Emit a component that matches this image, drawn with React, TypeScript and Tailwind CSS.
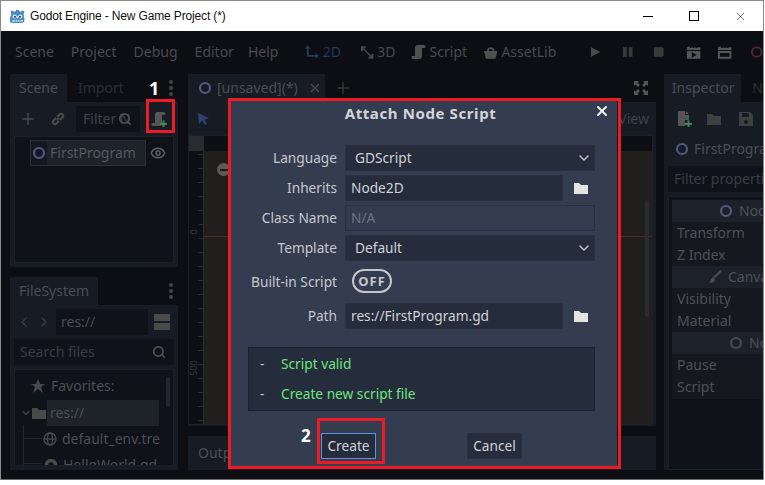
import React from 'react';
import { ChevronDown, ChevronLeft, ChevronRight, Eye, Plus, Search, X } from 'lucide-react';

const font = { fontFamily: '"Noto Sans", sans-serif' };

const ticks = Array.from({ length: 20 }, (_, i) => i);

const Circle = ({ className = 'text-[#4f5b7e]' }: { className?: string }) => (
  <svg width="14" height="14" viewBox="0 0 14 14" className={`shrink-0 ${className}`}>
    <circle cx="7" cy="7" r="5" fill="none" stroke="currentColor" strokeWidth="2.2" />
  </svg>
);

const Folder = ({ className = 'text-[#e0e0e0]', size = 14 }: { className?: string; size?: number }) => (
  <svg width={size} height={size} viewBox="0 0 14 14" className={`shrink-0 ${className}`}>
    <path d="M0 2h5l2 2h7v9H0z" fill="currentColor" />
  </svg>
);

const ScriptIcon = ({ className = 'text-[#555]', plus }: { className?: string; plus?: boolean }) => (
  <svg width="16" height="16" viewBox="0 0 16 16" className={`shrink-0 ${className}`}>
    <path d="M6 1h7a2 2 0 0 1 1 3h-3v8a3 3 0 0 1-2 3H2a2 2 0 0 1-1-3h3V4a3 3 0 0 1 2-3z" fill="currentColor" />
    {plus && <path d="M9 12h2.500V9.500h2V12H16v2h-2.500v2h-2v-2H9z" fill="#3f8a52" />}
  </svg>
);

const PageIcon = () => (
  <svg width="16" height="16" viewBox="0 0 16 16" className="shrink-0 text-[#555]">
    <path d="M2 0h7v4h4v5H9v6H2zM10 0l3 3h-3z" fill="currentColor" />
    <path d="M9 12h2.500V9.500h2V12H16v2h-2.500v2h-2v-2H9z" fill="#3f8a52" />
  </svg>
);

const Dots = () => (
  <div className="flex flex-col gap-[2px]">
    <span className="w-1 h-1 rounded-full bg-[#444]" />
    <span className="w-1 h-1 rounded-full bg-[#444]" />
    <span className="w-1 h-1 rounded-full bg-[#444]" />
  </div>
);

const GodotLogo = () => (
  <svg width="15" height="15" viewBox="0 0 16 16" className="shrink-0">
    <path d="M1.500 5.500L.5 2.500 3 1.500l1 1.500 2-.5.500-1.500h3l.5 1.500 2 .5 1-1.500 2.500 1-1 3 .5 3.500.500 1-.5 4-3 1H3l-3-1-.5-4 .5-1z" fill="#478cbf" />
    <circle cx="5" cy="8" r="2.200" fill="#e8eef4" />
    <circle cx="11" cy="8" r="2.200" fill="#e8eef4" />
    <circle cx="5.300" cy="8.200" r="1.100" fill="#2f3a46" />
    <circle cx="10.700" cy="8.200" r="1.100" fill="#2f3a46" />
    <rect x="7.300" y="8" width="1.400" height="2" fill="#e8eef4" />
    <path d="M2.500 12h11v1.500h-11z" fill="#e8eef4" />
    <path d="M5 12h1v1.500H5zM7.500 12h1v1.500h-1zM10 12h1v1.500h-1z" fill="#478cbf" />
  </svg>
);

const Field = ({ children, wide, dim }: { children: React.ReactNode; wide?: boolean; dim?: boolean }) => (
  <div className={`h-[26px] flex items-center px-[5px] border border-[#2a3040] ${wide ? 'w-[250px]' : 'w-[218px]'} ${dim ? 'bg-[#333b4e] text-[#6b7280]' : 'bg-[#252c3b] text-[#d0d2d6]'}`}>
    {children}
  </div>
);

const Row = ({ label, children }: { label: string; children: React.ReactNode }) => (
  <div className="flex items-center gap-2 h-[26px]">
    <span className="w-[89px] text-right whitespace-nowrap text-[#c6c8cd]">{label}</span>
    {children}
  </div>
);

const Select = ({ value }: { value: string }) => (
  <div className="w-[250px] h-[26px] flex items-center justify-between pl-[9px] pr-[2px] border border-[#2a3040] bg-[#252c3b] text-[#d0d2d6]">
    {value}
    <ChevronDown size={16} strokeWidth={2.4} className="text-[#b9bcc2]" />
  </div>
);

const DialogBox = () => (
  <div className="absolute left-[228px] top-[98px] w-[393px] h-[371px] border-[3px] border-[#ed1c24] pr-px">
    <div className="h-full bg-[#343c50] pl-[17px] pr-[22px] text-[13.7px] relative">
      <div className="h-[25px] flex items-center justify-center font-bold text-[#d2d4d8] text-[15px] tracking-[0.6px] pr-[2px]">Attach Node Script</div>
      <X size={16} strokeWidth={3} className="absolute right-[7px] top-[2px] text-[#f0f0f0]" />
      <div className="flex flex-col gap-1 mt-[19px]">
        <Row label="Language"><Select value="GDScript" /></Row>
        <Row label="Inherits">
          <Field>Node2D</Field>
          <Folder className="ml-[3px] text-[#e4e4e4]" />
        </Row>
        <Row label="Class Name"><Field wide dim>N/A</Field></Row>
        <Row label="Template"><Select value="Default" /></Row>
      </div>
      <div className="flex items-center gap-[15px] h-[26px] mt-[7px]">
        <span className="w-[89px] text-right whitespace-nowrap text-[#c6c8cd] pt-[2px]">Built-in Script</span>
        <div className="w-[40px] h-[24px] rounded-full border-[2px] border-[#c4c6cb] flex items-center justify-center font-bold text-[13px] tracking-[1px] text-[#c6c8cd]">OFF</div>
      </div>
      <div className="mt-[9px]">
        <Row label="Path">
          <Field>res://FirstProgram.gd</Field>
          <Folder className="ml-[3px] text-[#e4e4e4]" />
        </Row>
      </div>
      <div className="mt-[18px] h-[64px] w-[347px] bg-[#252c3b] border border-[#1c2230] flex flex-col pt-px">
        <div className="h-[30px] flex items-center text-[#6ee57f]"><span className="w-[32px] pl-[11px] text-[#c6c8cd]">-</span>Script valid</div>
        <div className="h-[30px] flex items-center text-[#6ee57f]"><span className="w-[32px] pl-[11px] text-[#c6c8cd]">-</span>Create new script file</div>
      </div>
      <div className="flex items-center mt-[22px] pl-[73px]">
        <div className="w-[55px] h-[26px] flex items-center justify-center border border-[#5a94de] bg-[#252c3b] text-[#d0d2d6]">Create</div>
        <div className="w-[55px] h-[26px] ml-[91px] flex items-center justify-center border border-[#2a3040] bg-[#252c3b] text-[#d0d2d6]">Cancel</div>
      </div>
    </div>
  </div>
);

const Marks = () => (
  <>
    <div className="absolute left-[146px] top-[99px] w-[29px] h-[34px] border-[3px] border-[#ed1c24]" />
    <div className="absolute left-[317px] top-[418px] w-[68px] h-[46px] border-[3px] border-[#ed1c24]" />
    <span className="absolute left-[149px] top-[76px] font-bold text-[18px] leading-[24px] text-white">1</span>
    <span className="absolute left-[301px] top-[424px] font-bold text-[17px] leading-[24px] text-white">2</span>
  </>
);

const InspectorRow = ({ children }: { children: React.ReactNode }) => (
  <div className="h-[22px] flex items-center pl-[5px] text-[#4d5157] whitespace-nowrap">{children}</div>
);

const InspectorHead = ({ children, className }: { children: React.ReactNode; className: string }) => (
  <div className={`h-[22px] flex items-center gap-[6px] bg-[#1d2129] text-[#4d5157] whitespace-nowrap ${className}`}>{children}</div>
);

const App = () => (
  <div className="relative w-[765px] h-[485px] bg-white overflow-hidden text-sm" style={font}>
    <div className="w-[764px] h-[480px] border-t border-l border-r border-[#8a8a8a] flex flex-col">
      {/* title bar */}
      <div className="h-[30px] shrink-0 flex items-center bg-white text-[#111]">
        <div className="ml-[9px] mr-[5px]"><GodotLogo /></div>
        <span style={{ fontFamily: '"Liberation Sans", sans-serif' }} className="text-[12px] tracking-[-0.15px] pt-[2px]">Godot Engine - New Game Project (*)</span>
        <div className="ml-auto flex items-center">
          <div className="w-[46px] flex justify-center"><span className="w-[10px] h-px bg-black" /></div>
          <div className="w-[46px] flex justify-center"><span className="w-[10px] h-[10px] border border-black" /></div>
          <div className="w-[46px] flex justify-center"><X size={13} strokeWidth={1} className="text-black" /></div>
        </div>
      </div>
      {/* editor */}
      <div className="flex-1 min-h-0 bg-[#0c0e13] border-b border-[#6a6a6a] flex flex-col overflow-hidden">
        <div className="h-[43px] shrink-0 pb-[2px] flex items-center text-[#484b51]">
          <span className="ml-[14px]">Scene</span>
          <span className="ml-[17px]">Project</span>
          <span className="ml-[17px]">Debug</span>
          <span className="ml-[17px]">Editor</span>
          <span className="ml-[14px]">Help</span>
          <svg width="16" height="16" viewBox="0 0 16 16" className="ml-[26px] text-[#24395c]">
            <path d="M4 1l3 3.500H5V11h7V9l3.500 3-3.500 3v-2H3V4.500H1z" fill="currentColor" />
          </svg>
          <span className="ml-[3px] text-[#24395c]">2D</span>
          <svg width="16" height="16" viewBox="0 0 16 16" className="ml-[18px] text-[#4a4a4a]">
            <path d="M2 2h5v2H5l8 8v-2h2v5h-5v-2h2L4 5v2H2z" fill="currentColor" />
          </svg>
          <span className="ml-[3px]">3D</span>
          <ScriptIcon className="ml-[15px] text-[#4f4f4f]" />
          <span className="ml-[3px]">Script</span>
          <svg width="16" height="16" viewBox="0 0 16 16" className="ml-[16px] text-[#4f4f4f]">
            <path d="M1 7h3a4 4 0 0 1 8 0h3l-2 8H3zM6 7h4a2 2 0 0 0-4 0z" fill="currentColor" />
          </svg>
          <span className="ml-[3px]">AssetLib</span>
          <svg width="12" height="12" viewBox="0 0 12 12" className="ml-[34px] text-[#4a4a4a]"><path d="M1 1l10 5-10 5z" fill="currentColor" /></svg>
          <svg width="12" height="12" viewBox="0 0 12 12" className="ml-[20px] text-[#3a3a3a]"><path d="M1 1h4v10H1zM7 1h4v10H7z" fill="currentColor" /></svg>
          <svg width="12" height="12" viewBox="0 0 12 12" className="ml-[20px] text-[#3a3a3a]"><rect x="1" y="1" width="10" height="10" rx="1" fill="currentColor" /></svg>
          <svg width="16" height="14" viewBox="0 0 16 14" className="ml-[21px] text-[#555]"><path d="M1 2l3-1v2l3-1v1l3-1v1l3-1 2 0v3H1zM1 6h14v8H1zM6 7v6l5-3z" fill="currentColor" fillRule="evenodd" /></svg>
          <svg width="16" height="14" viewBox="0 0 16 14" className="ml-[16px] text-[#555]"><path d="M1 2l3-1v2l3-1v1l3-1v1l3-1 2 0v3H1zM1 6h14v8H1zM3 8v4h10V8z" fill="currentColor" fillRule="evenodd" /></svg>
          <svg width="14" height="14" viewBox="0 0 14 14" className="ml-[17px] text-[#4e2533]"><circle cx="7" cy="7" r="5" fill="none" stroke="currentColor" strokeWidth="2" /></svg>
        </div>
        <div className="flex-1 min-h-0 flex pl-[9px] pb-[9px] gap-[10px]">
          {/* left docks */}
          <div className="w-[168px] shrink-0 flex flex-col gap-[10px]">
            <div className="h-[193px] flex flex-col">
              <div className="h-[28px] shrink-0 flex items-center">
                <span className="h-full w-[57px] bg-[#171b24] flex items-center justify-center text-[#4a4e55]">Scene</span>
                <span className="ml-[11px] text-[#2d3037]">Import</span>
                <div className="ml-auto mr-[5px]"><Dots /></div>
              </div>
              <div className="flex-1 bg-[#171b24] px-1 pb-1 flex flex-col">
                <div className="h-[34px] shrink-0 flex items-center text-[#4a4a4a]">
                  <Plus size={18} strokeWidth={2} className="ml-[5px]" />
                  <svg width="14" height="14" viewBox="0 0 14 14" className="ml-[14px]" fill="none" stroke="currentColor" strokeWidth="2">
                    <path d="M6 8l2-2M5 6L2.500 8.500a2 2 0 0 0 3 3L8 9M6 5l2.500-2.500a2 2 0 0 1 3 3L9 8" />
                  </svg>
                  <div className="relative ml-[11px] w-[64px] h-[26px] bg-[#0f1219] flex items-center pl-[7px] text-[#3f4248] overflow-hidden whitespace-nowrap">
                    Filter N
                    <Search size={14} strokeWidth={3} className="absolute left-[42px] top-[6px] text-[#4f4f4f]" />
                  </div>
                  <ScriptIcon className="ml-[11px] text-[#555]" plus />
                </div>
                <div className="flex-1 bg-[#0f1219] border border-[#1c2029] pt-[3px] pl-[15px]">
                  <div className="flex items-center">
                    <div className="w-[116px] h-[26px] flex items-center bg-[#1e2229] border border-[#2a2e36]">
                      <span className="w-[16px] h-full bg-[#141822] flex items-center justify-center shrink-0"><Circle /></span>
                      <span className="ml-[3px] text-[#545861]">FirstProgram</span>
                    </div>
                    <Eye size={16} strokeWidth={2.5} className="ml-[4px] text-[#5a5a5a]" />
                  </div>
                </div>
              </div>
            </div>
            <div className="flex-1 min-h-0 flex flex-col">
              <div className="h-[28px] shrink-0 flex items-center">
                <span className="h-full w-[88px] bg-[#171b24] flex items-center justify-center text-[#4a4e55]">FileSystem</span>
                <div className="ml-auto mr-[5px]"><Dots /></div>
              </div>
              <div className="flex-1 min-h-0 bg-[#171b24] p-1 flex flex-col gap-1">
                <div className="h-[26px] shrink-0 flex items-center text-[#3a3d43]">
                  <ChevronLeft size={16} className="ml-[2px]" />
                  <ChevronRight size={16} className="ml-[4px]" />
                  <div className="ml-[4px] w-[92px] h-[26px] bg-[#0f1219] flex items-center pl-[5px] text-[#4a4e55]">res://</div>
                  <div className="ml-[6px] flex flex-col gap-[2px]">
                    <span className="w-[16px] h-[7px] bg-[#4a4a4a]" />
                    <span className="w-[16px] h-[7px] bg-[#4a4a4a]" />
                  </div>
                </div>
                <div className="h-[26px] shrink-0 bg-[#0f1219] flex items-center justify-between pl-[6px] pr-[8px] text-[#3a3d43]">
                  Search files
                  <Search size={14} strokeWidth={3} className="text-[#4f4f4f]" />
                </div>
                <div className="relative flex-1 min-h-0 bg-[#0f1219] border border-[#1c2029] overflow-hidden text-[#4a4e55]">
                  <div className="h-[30px] pt-px flex items-center pl-[16px] gap-[6px] whitespace-nowrap">
                    <svg width="14" height="14" viewBox="0 0 14 14" className="text-[#4a4a4a]"><path d="M7 0l2 5h5l-4 3 2 6-5-4-5 4 2-6-4-3h5z" fill="currentColor" /></svg>
                    Favorites:
                  </div>
                  <div className="h-[26px] flex items-center pl-[5px]">
                    <ChevronDown size={12} strokeWidth={3} className="text-[#3a3d43]" />
                    <Folder className="text-[#4a4a4a]" />
                    <span className="ml-[1px] w-[112px] h-full flex items-center pl-[3px] bg-[#1e2229]">res://</span>
                  </div>
                  <div className="h-[26px] flex items-center pl-[28px] gap-[5px] whitespace-nowrap">
                    <svg width="14" height="14" viewBox="0 0 14 14" fill="none" stroke="#4a4a4a" strokeWidth="1.400"><circle cx="7" cy="7" r="6" /><ellipse cx="7" cy="7" rx="2.500" ry="6" /><path d="M1 7h12" /></svg>
                    default_env.tre
                  </div>
                  <div className="h-[26px] flex items-center pl-[29px] gap-[5px] whitespace-nowrap">
                    <svg width="14" height="14" viewBox="0 0 14 14"><circle cx="7" cy="7" r="4.500" fill="none" stroke="#4a4a4a" strokeWidth="3.500" /></svg>
                    HelloWorld.gd
                  </div>
                  <div className="absolute left-[151px] top-[7px] w-[4px] h-[30px] rounded-full bg-[#23262d]" />
                  <div className="absolute left-[8px] top-[55px] w-px h-[42px] bg-[#23262d]" />
                  <div className="absolute left-[8px] top-[68px] w-[19px] h-px bg-[#23262d]" />
                  <div className="absolute left-[8px] top-[93px] w-[19px] h-px bg-[#23262d]" />
                </div>
              </div>
            </div>
          </div>
          {/* center */}
          <div className="w-[468px] shrink-0 flex flex-col gap-[10px]">
            <div className="flex-1 min-h-0 flex flex-col">
              <div className="h-[28px] shrink-0 flex items-center text-[#4a4e55]">
                <span className="h-full w-[137px] bg-[#171b24] flex items-center pl-[10px] gap-[5px]">
                  <Circle />
                  [unsaved](*)
                  <X size={14} strokeWidth={2.5} className="ml-[5px] text-[#4a4a4a]" />
                </span>
                <Plus size={18} className="ml-[9px] text-[#333]" />
                <svg width="14" height="14" viewBox="0 0 14 14" className="ml-auto mr-[8px] text-[#555]" fill="currentColor"><path d="M0 0h5L3.500 1.500 6 4 4 6 1.500 3.500 0 5zM14 0v5l-1.500-1.500L10 6 8 4l2.500-2.500L9 0zM0 14V9l1.500 1.500L4 8l2 2-2.500 2.500L5 14zM14 14H9l1.500-1.500L8 10l2-2 2.500 2.500L14 9z" /></svg>
              </div>
              <div className="flex-1 min-h-0 bg-[#171b24] flex flex-col">
                <div className="h-[33px] shrink-0 flex items-center pl-[8px] pr-[7px] text-[#3f4248]">
                  <svg width="14" height="14" viewBox="0 0 14 14" className="text-[#2a4470]"><path d="M2 1l11 5-4.500 1.500L11 12l-2 1-2.500-4.500L3 12z" fill="currentColor" /></svg>
                  <span className="ml-auto">View</span>
                </div>
                <div className="flex-1 min-h-0 mx-0 mb-[1px] mr-[3px] border border-[#1c2029] flex flex-col bg-[#0d0f14]">
                  <div className="h-[15px] shrink-0 flex">
                    <span className="w-[15px] bg-[#2a2b2e]" />
                  </div>
                  <div className="flex-1 min-h-0 flex">
                    <div className="relative w-[15px] shrink-0 border-r border-[#2a2c30] overflow-hidden flex flex-col items-end gap-[13px] pt-[3px]">
                      {ticks.map(i => (
                        <span key={i} className="w-[5px] h-px shrink-0 bg-[#2a2c30]" />
                      ))}
                      <span className="absolute left-[2px] top-[75px] text-[9px] leading-[12px] text-[#3a3a3a] -rotate-90">0</span>
                      <span className="absolute left-[-3px] top-[211px] text-[9px] leading-[12px] text-[#3a3a3a] -rotate-90">500</span>
                    </div>
                    <div className="relative flex-1 bg-[#201f1e]">
                      <div className="absolute left-0 right-0 top-[85px] h-px bg-[#4a2a26]" />
                      <span className="absolute left-[13px] top-[12px] w-[13px] h-[13px] rounded-full bg-[#5a5a5a] flex items-center justify-center">
                        <span className="w-[8px] h-[2px] bg-[#1c1c1c]" />
                      </span>
                      <span className="absolute right-[3px] top-[49px] w-[4px] h-[117px] rounded-full bg-[#2c2c2c]" />
                    </div>
                  </div>
                </div>
              </div>
            </div>
            <div className="h-[34px] shrink-0 bg-[#171b24] flex items-center pl-[10px] text-[#4a4e55]">Output</div>
          </div>
          {/* inspector */}
          <div className="flex-1 min-w-0 ml-[-2px] flex flex-col overflow-hidden">
            <div className="h-[28px] shrink-0 flex items-center">
              <span className="h-full w-[80px] bg-[#171b24] flex items-center justify-center pl-px text-[#4a4e55]">Inspector</span>
              <span className="ml-[11px] text-[#2d3037]">N</span>
            </div>
            <div className="flex-1 min-h-0 bg-[#171b24] pl-[4px] flex flex-col">
              <div className="h-[34px] shrink-0 flex items-center pl-[8px] text-[#4f4f4f]">
                <PageIcon />
                <Folder className="ml-[15px] text-[#3f3f3f]" />
                <svg width="14" height="14" viewBox="0 0 14 14" className="ml-[18px] text-[#3f3f3f]"><path d="M0 0h11l3 3v11H0zM3 1v4h7V1zM7 8a2 2 0 1 0 .01 0z" fill="currentColor" fillRule="evenodd" /></svg>
              </div>
              <div className="h-[26px] shrink-0 flex items-center pl-[7px] gap-[5px] whitespace-nowrap text-[#4a4e55]"><Circle /><span>FirstProgram</span></div>
              <div className="mt-[4px] h-[26px] shrink-0 bg-[#0f1219] flex items-center pl-[6px] whitespace-nowrap text-[#3a3d43]">Filter properties</div>
              <div className="mt-[4px] flex-1 bg-[#0f1219] border border-[#1c2029] pl-[3px] pt-[3px]">
                <div className="bg-[#15181e] pb-[1px]">
                  <InspectorHead className="pl-[47px]"><Circle />Node2D</InspectorHead>
                  <InspectorRow>Transform</InspectorRow>
                  <InspectorRow>Z Index</InspectorRow>
                  <InspectorHead className="pl-[36px]"><svg width="14" height="14" viewBox="0 0 14 14" className="shrink-0 text-[#4f4f4f]"><path d="M14 1L7 8 5.500 6.500 12.500 0zM5 7l2 2c0 3-3 4-6 4 2-1 1-4 4-6z" fill="currentColor" /></svg>CanvasItem</InspectorHead>
                  <InspectorRow>Visibility</InspectorRow>
                  <InspectorRow>Material</InspectorRow>
                  <InspectorHead className="pl-[57px]"><Circle className="text-[#4a4a4a]" />Node</InspectorHead>
                  <InspectorRow>Pause</InspectorRow>
                  <InspectorRow>Script</InspectorRow>
                </div>
              </div>
            </div>
          </div>
        </div>
      </div>
    </div>
    <DialogBox />
    <Marks />
  </div>
);

export default App;
